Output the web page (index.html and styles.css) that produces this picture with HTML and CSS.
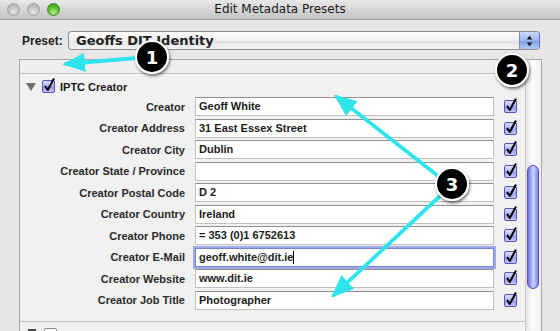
FILE: index.html
```html
<!DOCTYPE html>
<html>
<head>
<meta charset="utf-8">
<title>Edit Metadata Presets</title>
<link rel="stylesheet" href="styles.css">
</head>
<body>
<div class="titlebar">
  <div class="lights"><span class="light gray"></span><span class="light gray"></span><span class="light green"></span></div>
  <div class="title">Edit Metadata Presets</div>
</div>
<div class="preset-row">
  <span class="preset-label">Preset:</span>
  <div class="popup">
    <span class="popup-text">Geoffs DIT Identity</span>
    <span class="stepper"><svg viewBox="0 0 20 18" width="20" height="18"><path d="M7 7.5 L10 3.5 L13 7.5 Z M7 10.5 L10 14.5 L13 10.5 Z" fill="#1a1a1a"/></svg></span>
  </div>
</div>
<div class="panel">
  <div class="content">
    <div class="prev-strip"></div>
    <div class="section-head">
      <span class="disclosure"></span>
      <span class="cb"><svg viewBox="0 0 13 13"><path d="M3 6 L5.8 10 L12 -1.5"/></svg></span>
      <span class="section-title">IPTC Creator</span>
    </div>
    <div class="rows">
      <label>Creator</label><div class="field">Geoff White</div><span class="cb"><svg viewBox="0 0 13 13"><path d="M3 6 L5.8 10 L12 -1.5"/></svg></span>
      <label>Creator Address</label><div class="field">31 East Essex Street</div><span class="cb"><svg viewBox="0 0 13 13"><path d="M3 6 L5.8 10 L12 -1.5"/></svg></span>
      <label>Creator City</label><div class="field">Dublin</div><span class="cb"><svg viewBox="0 0 13 13"><path d="M3 6 L5.8 10 L12 -1.5"/></svg></span>
      <label>Creator State / Province</label><div class="field"></div><span class="cb"><svg viewBox="0 0 13 13"><path d="M3 6 L5.8 10 L12 -1.5"/></svg></span>
      <label>Creator Postal Code</label><div class="field">D 2</div><span class="cb"><svg viewBox="0 0 13 13"><path d="M3 6 L5.8 10 L12 -1.5"/></svg></span>
      <label>Creator Country</label><div class="field">Ireland</div><span class="cb"><svg viewBox="0 0 13 13"><path d="M3 6 L5.8 10 L12 -1.5"/></svg></span>
      <label>Creator Phone</label><div class="field">= 353 (0)1 6752613</div><span class="cb"><svg viewBox="0 0 13 13"><path d="M3 6 L5.8 10 L12 -1.5"/></svg></span>
      <label>Creator E-Mail</label><div class="field focus">geoff.white@dit.ie<span class="caret"></span></div><span class="cb"><svg viewBox="0 0 13 13"><path d="M3 6 L5.8 10 L12 -1.5"/></svg></span>
      <label>Creator Website</label><div class="field">www.dit.ie</div><span class="cb"><svg viewBox="0 0 13 13"><path d="M3 6 L5.8 10 L12 -1.5"/></svg></span>
      <label>Creator Job Title</label><div class="field">Photographer</div><span class="cb"><svg viewBox="0 0 13 13"><path d="M3 6 L5.8 10 L12 -1.5"/></svg></span>
    </div>
    <div class="next-head">
      <span class="disclosure small"></span>
      <span class="cb empty"></span>
    </div>
  </div>
  <div class="scrollbar"><div class="thumb"></div></div>
</div>
<svg class="annot" width="560" height="331" viewBox="0 0 560 331">
  <defs>
    <marker id="ah" markerWidth="6" markerHeight="5" refX="5" refY="2.5" orient="auto" markerUnits="strokeWidth">
      <path d="M0 0 L6 2.5 L0 5 Z" fill="#30e4ec"/>
    </marker>
    <filter id="sh" x="-50%" y="-50%" width="200%" height="200%">
      <feDropShadow dx="1" dy="2" stdDeviation="1.5" flood-color="#000" flood-opacity="0.55"/>
    </filter>
  </defs>
  <g stroke="#30e4ec" stroke-width="3.8" fill="none" stroke-linecap="round">
    <line x1="137" y1="58" x2="66" y2="64" marker-end="url(#ah)"/>
    <line x1="438" y1="176" x2="337" y2="97" marker-end="url(#ah)"/>
    <line x1="440" y1="196" x2="334" y2="295" marker-end="url(#ah)"/>
  </g>
  <g filter="url(#sh)">
    <circle cx="152" cy="57" r="16" fill="#000" stroke="#fff" stroke-width="2"/>
    <circle cx="512" cy="70" r="16" fill="#000" stroke="#fff" stroke-width="2"/>
    <circle cx="452" cy="184" r="16" fill="#000" stroke="#fff" stroke-width="2"/>
  </g>
  <g class="num">
    <text x="152" y="63.5" text-anchor="middle">1</text>
    <text x="512" y="76.5" text-anchor="middle">2</text>
    <text x="452" y="190.5" text-anchor="middle">3</text>
  </g>
</svg>
</body>
</html>
```

FILE: styles.css
```css
* { box-sizing: border-box; margin: 0; padding: 0; }
html, body { width: 560px; height: 331px; overflow: hidden; }
body {
  background: #e6e6e6;
  font-family: "Liberation Sans", Arial, sans-serif;
  color: #1c1c1c;
  position: relative;
}

.titlebar {
  height: 20px;
  background: linear-gradient(#e8e8e8, #c3c3c3);
  border-bottom: 1px solid #9c9c9c;
  display: flex;
  align-items: center;
}
.lights { display: flex; gap: 7px; padding-left: 7px; }
.light {
  width: 13px; height: 13px; border-radius: 50%;
  display: block;
}
.light.gray {
  background: radial-gradient(circle at 50% 70%, #e4e4e4, #b9b9b9 70%);
  border: 1px solid #a2a2a2;
}
.light.green {
  background: radial-gradient(circle at 50% 75%, #b6f08a, #4fb628 60%, #2f8a12);
  border: 1px solid #3c8c20;
}
.title {
  flex: 1;
  margin-right: 60px;
  text-align: center;
  font-family: "DejaVu Sans", sans-serif;
  font-size: 12px;
  color: #1a1a1a;
  line-height: 19px;
}

.preset-row {
  display: flex;
  align-items: center;
  margin-top: 11px;
  height: 19px;
  padding-left: 22px;
}
.preset-label { font-weight: bold; font-size: 12px; width: 46px; }
.popup {
  width: 472px;
  height: 19px;
  border: 1px solid #8e8e8e;
  border-right-color: #6d62c8;
  border-radius: 4px;
  background: linear-gradient(#fdfdfd, #eeeeee 50%, #e2e2e2 51%, #f6f6f6);
  display: flex;
  align-items: center;
  overflow: hidden;
}
.popup-text {
  flex: 1;
  padding-left: 7px;
  font-family: "DejaVu Sans", sans-serif;
  font-weight: bold;
  font-size: 13px;
  line-height: 17px;
  color: #222;
}
.stepper {
  width: 20px; height: 17px;
  background: linear-gradient(#cbd8fa, #9bb3ee 50%, #7f9ce6 51%, #b2c6f6);
  border-left: 1px solid #7d86d6;
  display: flex; align-items: center; justify-content: center;
}

.panel {
  margin: 9px 0 0 19px;
  width: 523px;
  height: 272px;
  border: 1px solid #a9a9a9;
  border-bottom: 0;
  background: #f1f1f1;
  display: flex;
  overflow: hidden;
}
.content { width: 505px; overflow: hidden; }
.prev-strip {
  height: 14px;
  background: #eeeeee;
  border-bottom: 1px solid #c6c6c6;
}
.section-head {
  height: 22px;
  padding: 3px 0 0 6px;
  display: flex;
  align-items: center;
}
.disclosure {
  width: 0; height: 0;
  border-left: 5px solid transparent;
  border-right: 5px solid transparent;
  border-top: 8px solid #707070;
}
.section-head .cb { margin-left: 6px; }
.section-title {
  margin-left: 5px;
  font-weight: bold;
  font-size: 11px;
  color: #1a1a1a;
}

.rows {
  display: grid;
  grid-template-columns: 165px 299px 13px;
  grid-auto-rows: 21.5px;
  column-gap: 10px;
  align-items: center;
}
.rows label {
  text-align: right;
  font-weight: bold;
  font-size: 11px;
  color: #2a2a2a;
  white-space: nowrap;
}
.field {
  height: 19px;
  background: #fff;
  border: 1px solid #c0c0c0;
  border-top-color: #8f8f8f;
  padding: 0 3px;
  font-weight: bold;
  font-size: 11px;
  line-height: 17px;
  white-space: nowrap;
  overflow: hidden;
  display: flex;
  align-items: center;
}
.field.focus {
  border-color: #7484d8;
  box-shadow: 0 0 0 2px rgba(122, 140, 228, 0.7);
}
.caret {
  display: inline-block;
  width: 0; height: 13px;
  border-left: 1px solid #000;
}

.cb {
  width: 13px; height: 13px;
  border: 1px solid #5b4fc6;
  border-radius: 2px;
  background: linear-gradient(#dfe2fc, #a7b0f0 50%, #8b96ea 51%, #c4ccfa);
  position: relative;
  display: block;
}
.cb svg {
  position: absolute;
  left: -1px; top: -1px;
  width: 13px; height: 13px;
  overflow: visible;
}
.cb svg path {
  fill: none;
  stroke: #000;
  stroke-width: 2;
  stroke-linejoin: round;
}
.cb.empty {
  background: linear-gradient(#ffffff, #e4e4e4);
  border-color: #8a8a8a;
}

.next-head {
  margin-top: 10px;
  border-top: 1px solid #c4c4c4;
  padding: 6px 0 0 8px;
  height: 20px;
  display: flex;
  align-items: flex-start;
  gap: 8px;
}
.disclosure.small {
  border-left: 0;
  border-right: 0;
  border-top: 0;
  width: 8px; height: 8px;
  background: #4a4a4a;
  margin-top: 1px;
}

.scrollbar {
  width: 16px;
  height: 100%;
  background: linear-gradient(90deg, #e4e4e4, #fbfbfb 45%, #f0f0f0);
  border-left: 1px solid #cacaca;
  border-top-right-radius: 6px;
  padding-top: 105px;
}
.thumb {
  width: 12px;
  height: 124px;
  margin-left: 1px;
  border-radius: 6px;
  border: 1px solid #5a46c8;
  background: linear-gradient(90deg, #6f6fe0, #b9c6fa 45%, #c9d4fc 55%, #7c82e6);
}

.annot {
  position: absolute;
  left: 0; top: 0;
  pointer-events: none;
}
.num text {
  fill: #fff;
  font-family: "DejaVu Sans", sans-serif;
  font-weight: bold;
  font-size: 18px;
}
```
